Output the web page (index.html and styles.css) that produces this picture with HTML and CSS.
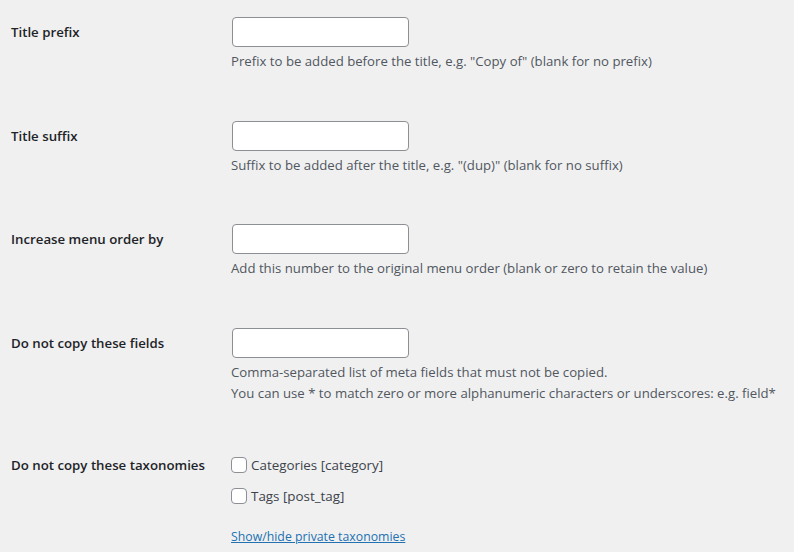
FILE: index.html
```html
<!DOCTYPE html>
<html>
<head>
<meta charset="utf-8">
<link rel="stylesheet" href="styles.css">
</head>
<body>
<div class="form">
  <div class="row">
    <div class="label">Title prefix</div>
    <div class="field">
      <input type="text" class="text">
      <p class="desc">Prefix to be added before the title, e.g. "Copy of" (blank for no prefix)</p>
    </div>
  </div>
  <div class="row">
    <div class="label">Title suffix</div>
    <div class="field">
      <input type="text" class="text">
      <p class="desc">Suffix to be added after the title, e.g. "(dup)" (blank for no suffix)</p>
    </div>
  </div>
  <div class="row">
    <div class="label">Increase menu order by</div>
    <div class="field">
      <input type="text" class="text">
      <p class="desc">Add this number to the original menu order (blank or zero to retain the value)</p>
    </div>
  </div>
  <div class="row">
    <div class="label">Do not copy these fields</div>
    <div class="field">
      <input type="text" class="text">
      <p class="desc">Comma-separated list of meta fields that must not be copied.<br>You can use * to match zero or more alphanumeric characters or underscores: e.g. field*</p>
    </div>
  </div>
  <div class="row row-tax">
    <div class="label">Do not copy these taxonomies</div>
    <div class="field">
      <label class="check first"><input type="checkbox"><span>Categories [category]</span></label>
      <label class="check"><input type="checkbox"><span>Tags [post_tag]</span></label>
      <a class="toggle" href="#">Show/hide private taxonomies</a>
    </div>
  </div>
</div>
</body>
</html>
```
FILE: styles.css
```css
html, body {
  margin: 0;
  padding: 0;
  background: #f0f0f1;
}
body {
  font-family: "Open Sans", "Noto Sans", sans-serif;
  color: #1d2327;
  width: 794px;
  height: 552px;
  overflow: hidden;
}
.form {
  padding-left: 11px;
}
.row {
  display: flex;
  padding: 17px 0 31.5px;
}
.row-tax {
  padding-top: 15px;
}
.label {
  width: 221px;
  flex: none;
  font-size: 13.25px;
  font-weight: 600;
  line-height: 18px;
  margin-top: 6px;
}
.field {
  display: flex;
  flex-direction: column;
  align-items: flex-start;
}
.text {
  box-sizing: border-box;
  width: 177px;
  height: 30px;
  margin: 0;
  border: 1px solid #8c8f94;
  border-radius: 4px;
  background: #fff;
}
.desc {
  margin: 4px 0 0 -1px;
  font-size: 13.2px;
  line-height: 21px;
  color: #50575e;
}
.check {
  display: flex;
  align-items: center;
  height: 22px;
  margin: 9px 0 0 -1px;
  font-size: 13.4px;
  color: #3c434a;
}
.check.first {
  margin-top: 4px;
}
.check input {
  appearance: none;
  -webkit-appearance: none;
  box-sizing: border-box;
  width: 16px;
  height: 16px;
  margin: 0 4px 0 0;
  border: 1px solid #8c8f94;
  border-radius: 4px;
  background: #fff;
}
.toggle {
  margin: 20px 0 0 -1px;
  font-size: 12.3px;
  line-height: 20px;
  color: #2271b1;
  text-decoration: underline;
}
```
